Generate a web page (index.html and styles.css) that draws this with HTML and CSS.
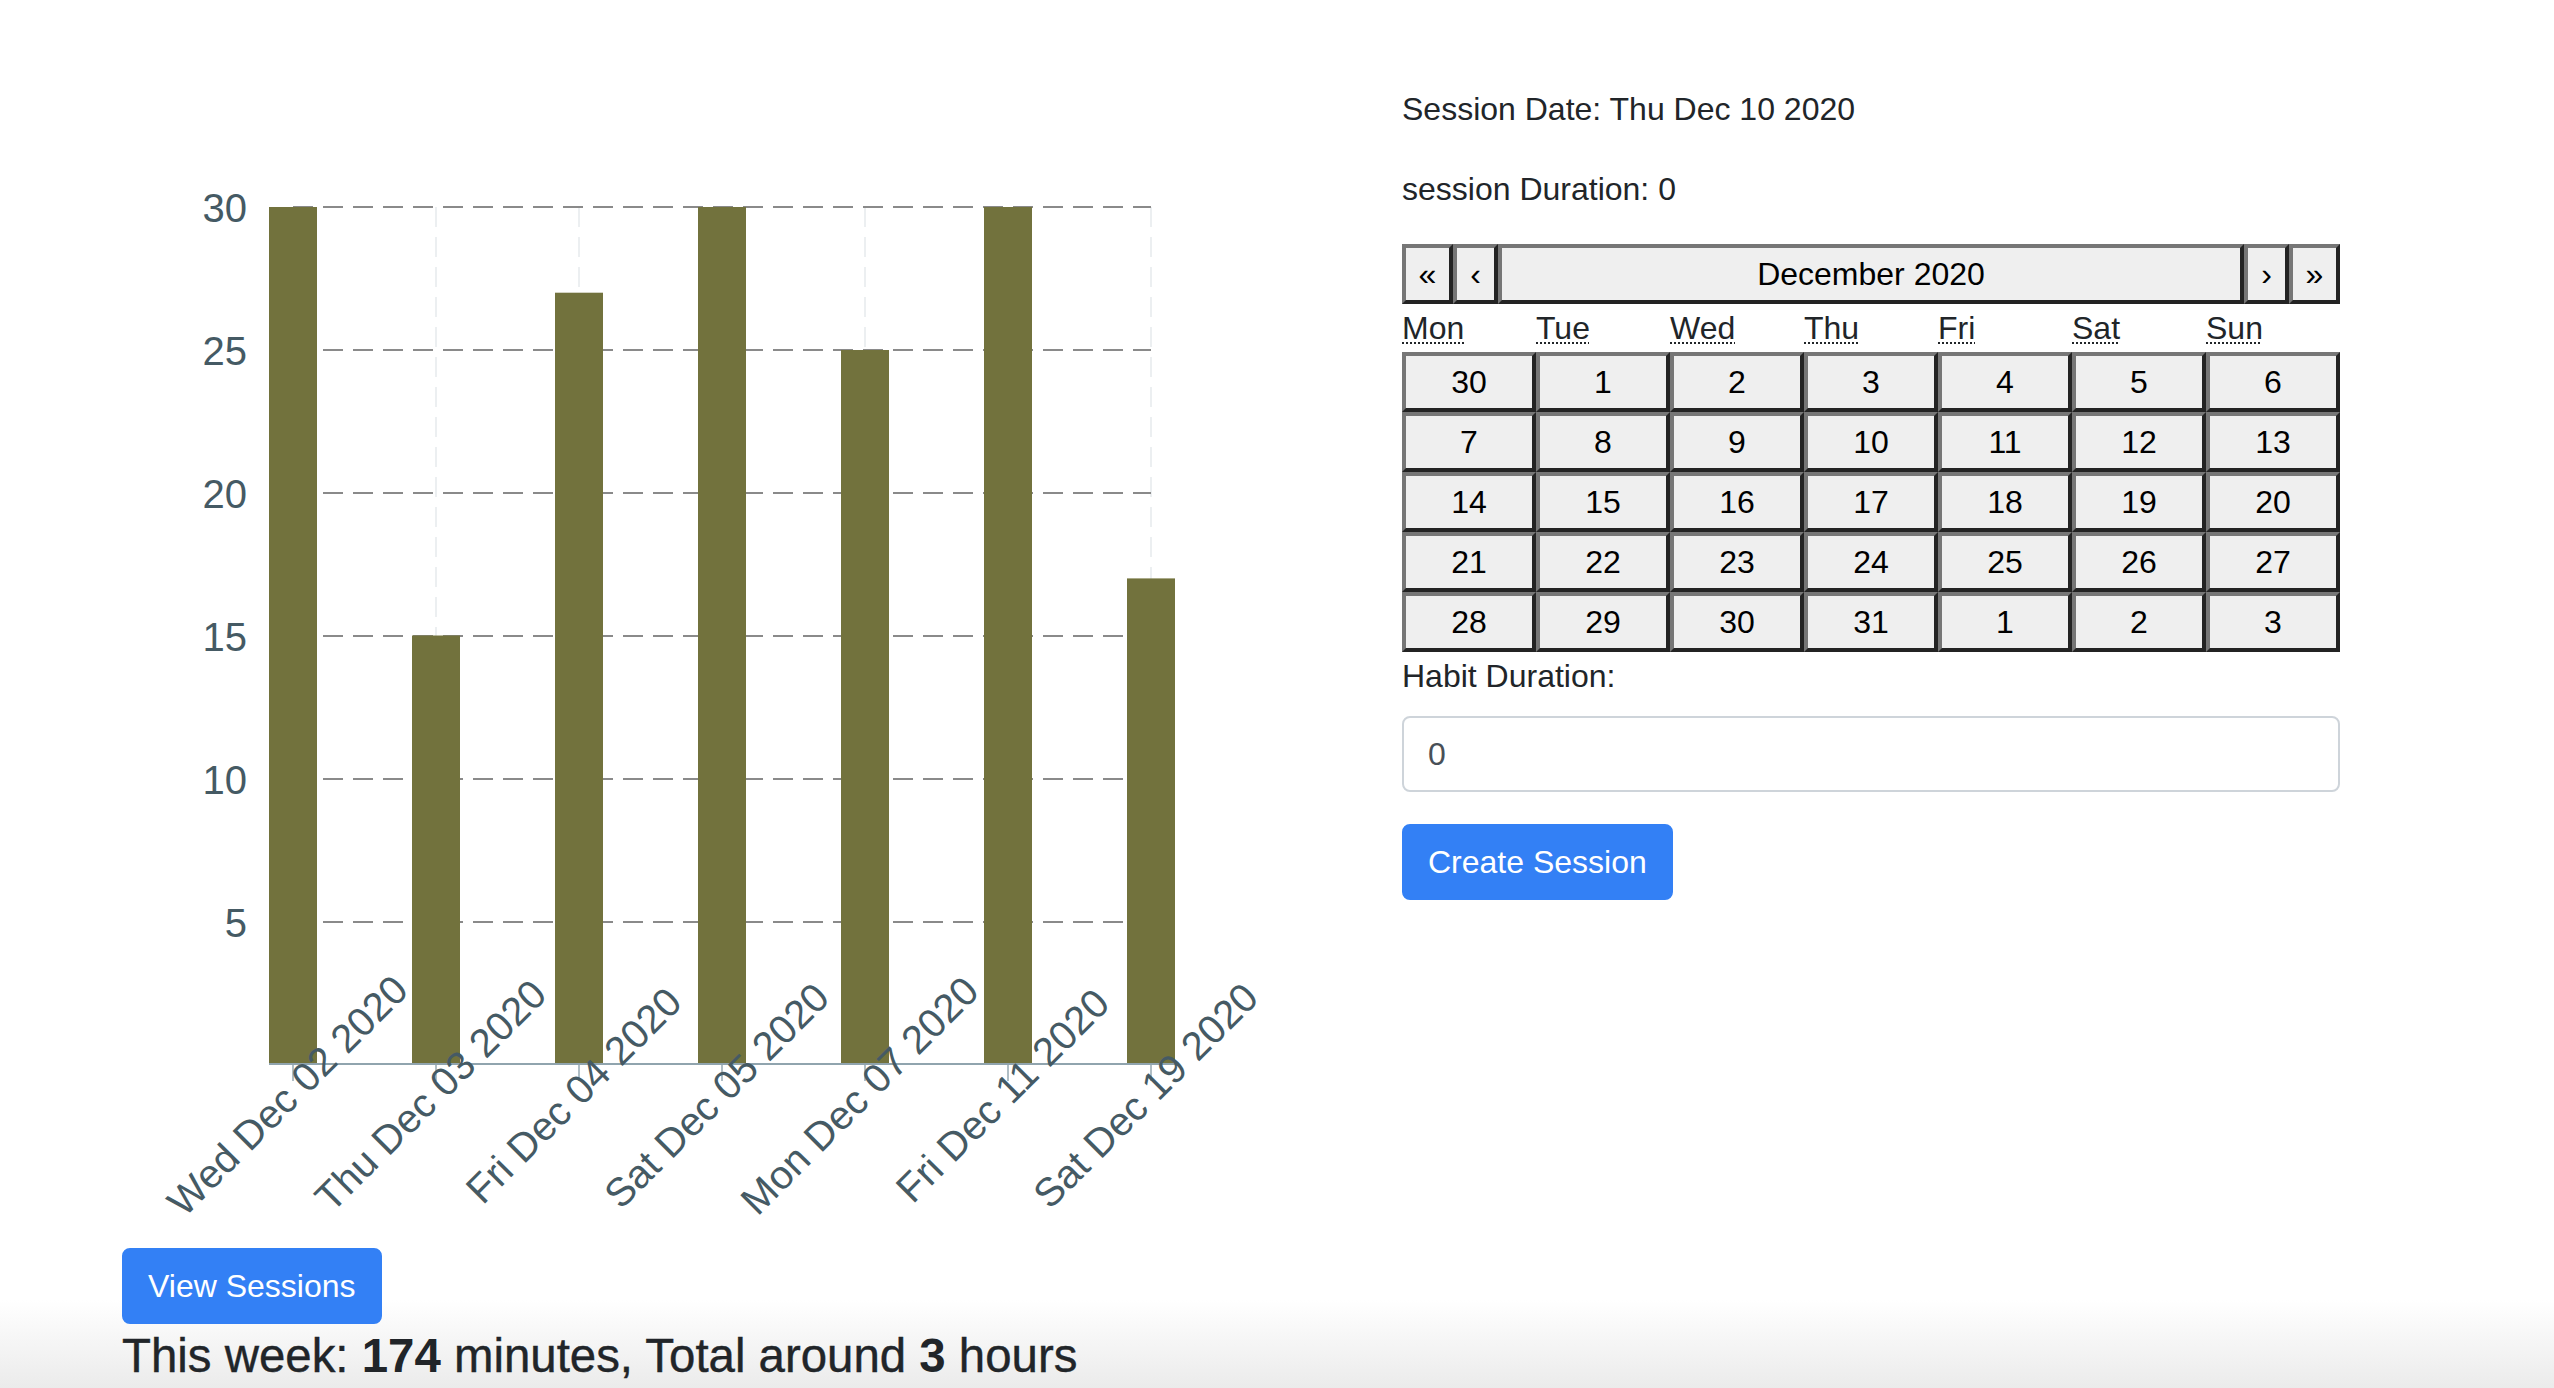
FILE: index.html
```html
<!DOCTYPE html>
<html lang="en">
<head>
<meta charset="utf-8">
<title>Habit Sessions</title>
<link rel="stylesheet" href="styles.css">
</head>
<body>
<div class="page">
  <section class="stats">
    <svg class="chart" width="1402" height="1248" viewBox="0 0 1402 1248" xmlns="http://www.w3.org/2000/svg">
      <g class="grid-v">
        <line x1="293" y1="207" x2="293" y2="1064"/>
        <line x1="436" y1="207" x2="436" y2="1064"/>
        <line x1="579" y1="207" x2="579" y2="1064"/>
        <line x1="722" y1="207" x2="722" y2="1064"/>
        <line x1="865" y1="207" x2="865" y2="1064"/>
        <line x1="1008" y1="207" x2="1008" y2="1064"/>
        <line x1="1151" y1="207" x2="1151" y2="1064"/>
      </g>
      <g class="grid-h">
        <line x1="293" y1="207" x2="1151" y2="207"/>
        <line x1="293" y1="350" x2="1151" y2="350"/>
        <line x1="293" y1="493" x2="1151" y2="493"/>
        <line x1="293" y1="636" x2="1151" y2="636"/>
        <line x1="293" y1="779" x2="1151" y2="779"/>
        <line x1="293" y1="922" x2="1151" y2="922"/>
      </g>
      <g class="ylabels">
        <text x="247" y="221.5">30</text>
        <text x="247" y="364.5">25</text>
        <text x="247" y="507.5">20</text>
        <text x="247" y="650.5">15</text>
        <text x="247" y="793.5">10</text>
        <text x="247" y="936.5">5</text>
      </g>
      <g class="bars">
        <rect x="269" y="207" width="48" height="857"/>
        <rect x="412" y="635.5" width="48" height="428.5"/>
        <rect x="555" y="292.7" width="48" height="771.3"/>
        <rect x="698" y="207" width="48" height="857"/>
        <rect x="841" y="350" width="48" height="714"/>
        <rect x="984" y="207" width="48" height="857"/>
        <rect x="1127" y="578.4" width="48" height="485.6"/>
      </g>
      <line class="axis" x1="269" y1="1064" x2="1175" y2="1064"/>
      <g class="ticks">
        <line x1="293" y1="1065" x2="293" y2="1081"/>
        <line x1="436" y1="1065" x2="436" y2="1081"/>
        <line x1="579" y1="1065" x2="579" y2="1081"/>
        <line x1="722" y1="1065" x2="722" y2="1081"/>
        <line x1="865" y1="1065" x2="865" y2="1081"/>
        <line x1="1008" y1="1065" x2="1008" y2="1081"/>
        <line x1="1151" y1="1065" x2="1151" y2="1081"/>
      </g>
      <g class="xlabels">
        <g transform="translate(287 1095) rotate(-45)"><text x="0" y="14.5">Wed Dec 02 2020</text></g>
        <g transform="translate(430 1095) rotate(-45)"><text x="0" y="14.5">Thu Dec 03 2020</text></g>
        <g transform="translate(573 1095) rotate(-45)"><text x="0" y="14.5">Fri Dec 04 2020</text></g>
        <g transform="translate(716 1095) rotate(-45)"><text x="0" y="14.5">Sat Dec 05 2020</text></g>
        <g transform="translate(859 1095) rotate(-45)"><text x="0" y="14.5">Mon Dec 07 2020</text></g>
        <g transform="translate(1002 1095) rotate(-45)"><text x="0" y="14.5">Fri Dec 11 2020</text></g>
        <g transform="translate(1145 1095) rotate(-45)"><text x="0" y="14.5">Sat Dec 19 2020</text></g>
      </g>
    </svg>
    <button class="btn btn-primary view-btn" type="button">View Sessions</button>
    <h4 class="summary">This week: <b>174</b> minutes, Total around <b>3</b> hours</h4>
  </section>

  <section class="session">
    <p class="session-date">Session Date: Thu Dec 10 2020</p>
    <p class="session-duration">session Duration: 0</p>

    <div class="calendar">
      <div class="cal-nav">
        <button class="cal-btn nav-far" type="button">«</button>
        <button class="cal-btn nav-near" type="button">‹</button>
        <button class="cal-btn cal-label" type="button">December 2020</button>
        <button class="cal-btn nav-near" type="button">›</button>
        <button class="cal-btn nav-far" type="button">»</button>
      </div>
      <div class="cal-weekdays">
        <div class="weekday"><abbr title="Monday">Mon</abbr></div>
        <div class="weekday"><abbr title="Tuesday">Tue</abbr></div>
        <div class="weekday"><abbr title="Wednesday">Wed</abbr></div>
        <div class="weekday"><abbr title="Thursday">Thu</abbr></div>
        <div class="weekday"><abbr title="Friday">Fri</abbr></div>
        <div class="weekday"><abbr title="Saturday">Sat</abbr></div>
        <div class="weekday"><abbr title="Sunday">Sun</abbr></div>
      </div>
      <div class="cal-days">
        <button class="cal-btn day" type="button">30</button>
        <button class="cal-btn day" type="button">1</button>
        <button class="cal-btn day" type="button">2</button>
        <button class="cal-btn day" type="button">3</button>
        <button class="cal-btn day" type="button">4</button>
        <button class="cal-btn day" type="button">5</button>
        <button class="cal-btn day" type="button">6</button>
        <button class="cal-btn day" type="button">7</button>
        <button class="cal-btn day" type="button">8</button>
        <button class="cal-btn day" type="button">9</button>
        <button class="cal-btn day" type="button">10</button>
        <button class="cal-btn day" type="button">11</button>
        <button class="cal-btn day" type="button">12</button>
        <button class="cal-btn day" type="button">13</button>
        <button class="cal-btn day" type="button">14</button>
        <button class="cal-btn day" type="button">15</button>
        <button class="cal-btn day" type="button">16</button>
        <button class="cal-btn day" type="button">17</button>
        <button class="cal-btn day" type="button">18</button>
        <button class="cal-btn day" type="button">19</button>
        <button class="cal-btn day" type="button">20</button>
        <button class="cal-btn day" type="button">21</button>
        <button class="cal-btn day" type="button">22</button>
        <button class="cal-btn day" type="button">23</button>
        <button class="cal-btn day" type="button">24</button>
        <button class="cal-btn day" type="button">25</button>
        <button class="cal-btn day" type="button">26</button>
        <button class="cal-btn day" type="button">27</button>
        <button class="cal-btn day" type="button">28</button>
        <button class="cal-btn day" type="button">29</button>
        <button class="cal-btn day" type="button">30</button>
        <button class="cal-btn day" type="button">31</button>
        <button class="cal-btn day" type="button">1</button>
        <button class="cal-btn day" type="button">2</button>
        <button class="cal-btn day" type="button">3</button>
      </div>
    </div>

    <form class="session-form">
      <div class="form-group">
        <label class="form-label" for="duration">Habit Duration:</label>
        <input class="form-control" id="duration" type="text" value="0">
      </div>
      <button class="btn btn-primary" type="button">Create Session</button>
    </form>
  </section>
</div>
</body>
</html>
```

FILE: styles.css
```css
html {
  height: 100%;
  background: linear-gradient(to bottom, #ffffff 0, #ffffff 1300px, #ebebeb 100%) no-repeat;
}

body {
  margin: 0;
  font-family: "Liberation Sans", Arial, sans-serif;
  font-size: 32px;
  line-height: 48px;
  color: #212529;
}

.page {
  display: flex;
  align-items: flex-start;
}

/* ---------- left column: chart ---------- */
.stats {
  flex: 0 0 1402px;
  width: 1402px;
}

.chart {
  display: block;
}

.grid-v line {
  stroke: #eceff1;
  stroke-width: 2;
  stroke-dasharray: 20 10;
}

.grid-h line {
  stroke: #8a8a8a;
  stroke-width: 2;
  stroke-dasharray: 20 10;
}

.bars rect {
  fill: #72723d;
}

.axis {
  stroke: #90a4ae;
  stroke-width: 2;
}

.ticks line {
  stroke: #b0bec5;
  stroke-width: 2;
}

.ylabels text,
.xlabels text {
  font-family: "Liberation Sans", Arial, sans-serif;
  font-size: 40px;
  fill: #455a64;
}

.ylabels text {
  text-anchor: end;
}

.xlabels text {
  text-anchor: middle;
}

.view-btn {
  margin-left: 122px;
}

.summary {
  margin: 3px 0 0 122px;
  font-size: 47.4px;
  line-height: 57.6px;
  font-weight: 500;
  -webkit-text-stroke: 0.4px #212529;
}

.summary b {
  font-weight: 700;
  -webkit-text-stroke: 0;
}

/* ---------- buttons ---------- */
.btn {
  display: inline-block;
  box-sizing: border-box;
  font-family: inherit;
  font-size: 32px;
  line-height: 48px;
  padding: 12px 24px;
  border: 2px solid transparent;
  border-radius: 8px;
  cursor: pointer;
}

.btn-primary {
  background: #3380f5;
  border-color: #3380f5;
  color: #ffffff;
}

/* ---------- right column ---------- */
.session {
  flex: 0 0 938px;
  width: 938px;
  padding-top: 85px;
}

.session-date {
  margin: 0 0 32px;
}

.session-duration {
  margin: 0 0 31px;
}

.calendar {
  width: 938px;
}

.cal-btn {
  box-sizing: border-box;
  margin: 0;
  font-family: inherit;
  font-size: 32px;
  line-height: 48px;
  padding: 2px 12px;
  border-width: 4px;
  border-style: solid;
  border-color: #767676 #232323 #232323 #767676;
  background: #efefef;
  color: #000000;
}

.cal-nav {
  display: flex;
  height: 60px;
}

.nav-far {
  flex: 0 0 51px;
  padding: 2px 0;
}

.nav-near {
  flex: 0 0 45px;
  padding: 2px 0;
}

.cal-label {
  flex: 1 1 auto;
}

.cal-weekdays {
  display: grid;
  grid-template-columns: repeat(7, 1fr);
}

.weekday abbr {
  text-decoration: underline dotted;
  text-decoration-thickness: 2px;
  text-underline-offset: 3px;
  cursor: help;
}

.cal-days {
  display: grid;
  grid-template-columns: repeat(7, 1fr);
}

.day {
  width: 100%;
  height: 60px;
  text-align: center;
}

/* ---------- form ---------- */
.form-group {
  margin-bottom: 32px;
}

.form-label {
  display: inline-block;
  margin-bottom: 16px;
}

.form-control {
  display: block;
  box-sizing: border-box;
  width: 100%;
  height: 76px;
  padding: 12px 24px;
  font-family: inherit;
  font-size: 32px;
  line-height: 48px;
  color: #495057;
  background: #ffffff;
  border: 2px solid #ced4da;
  border-radius: 8px;
}
```
